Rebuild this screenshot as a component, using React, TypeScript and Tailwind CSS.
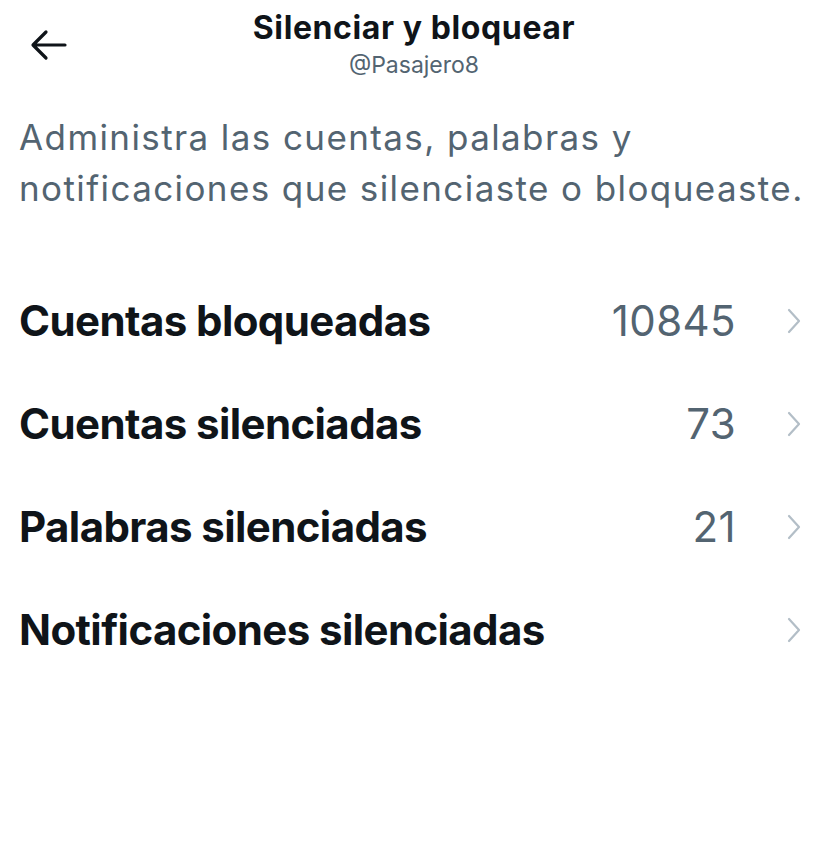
const rows = [
  { label: "Cuentas bloqueadas", count: "10845" },
  { label: "Cuentas silenciadas", count: "73" },
  { label: "Palabras silenciadas", count: "21" },
  { label: "Notificaciones silenciadas", count: "" },
];

function Chevron() {
  return (
    <svg width="16" height="26" viewBox="0 0 16 26" fill="none" className="text-[#b3bec7]">
      <path d="M3 2l10 11L3 24" stroke="currentColor" strokeWidth="2.2" strokeLinecap="round" strokeLinejoin="round" />
    </svg>
  );
}

export default function App() {
  return (
    <div className="min-h-screen w-full bg-white font-['Inter','Liberation_Sans',sans-serif] text-[#0f1419]">
      <header className="relative flex h-[96px] flex-col items-center pt-[8px]">
        <button className="absolute left-[28px] top-[25px] flex h-[40px] w-[40px] items-center justify-center">
          <svg width="38" height="32" viewBox="0 0 38 32" fill="none">
            <path d="M36 16H5M17 3L4 16l13 13" stroke="#0f1419" strokeWidth="3.2" strokeLinecap="round" strokeLinejoin="round" />
          </svg>
        </button>
        <h1 className="text-[32px] font-bold leading-[40px] tracking-[0.6px]">Silenciar y bloquear</h1>
        <p className="mt-[2px] text-[23px] leading-[30px] text-[#536471]">@Pasajero8</p>
      </header>

      <p className="pl-[19px] pr-[8px] pt-[16px] text-[35px] leading-[51px] tracking-[1.4px] text-[#536471]">
        Administra las cuentas, palabras y notificaciones que silenciaste o bloqueaste.
      </p>

      <ul className="mt-[55px]">
        {rows.map((r) => (
          <li key={r.label} className="flex h-[103px] items-center pl-[19px] pr-[26px]">
            <span className="flex-1 text-[42px] font-bold tracking-[-0.6px]">{r.label}</span>
            <span className="mr-[50px] text-[42px] tracking-[0.4px] text-[#536471]">{r.count}</span>
            <Chevron />
          </li>
        ))}
      </ul>
    </div>
  );
}
